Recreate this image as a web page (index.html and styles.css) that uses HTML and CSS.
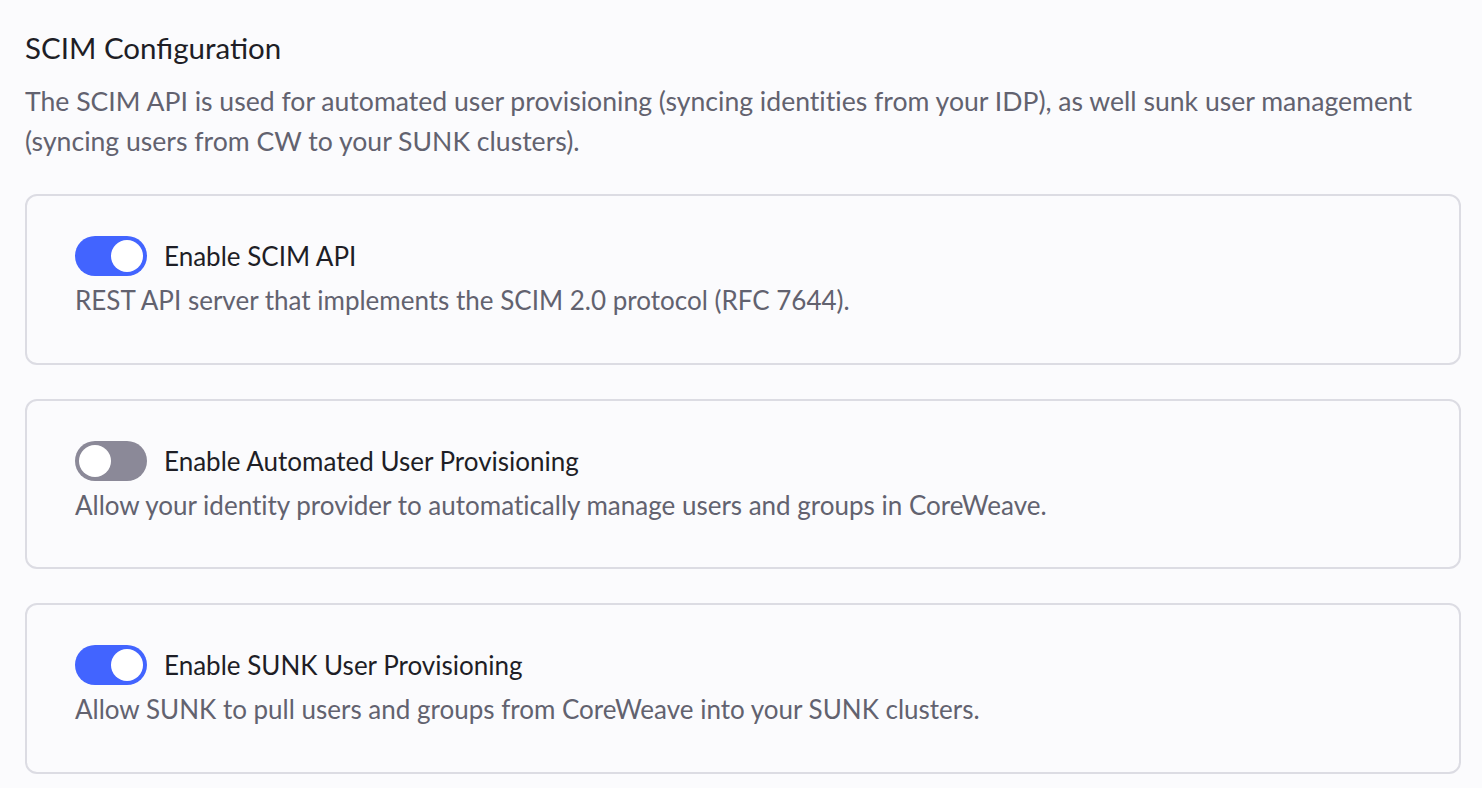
FILE: index.html
```html
<!DOCTYPE html>
<html lang="en">
<head>
<meta charset="utf-8">
<title>SCIM Configuration</title>
<link rel="stylesheet" href="styles.css">
</head>
<body>
<main class="page">
  <section class="intro">
    <h1 class="title">SCIM Configuration</h1>
    <p class="lead">The SCIM API is used for automated user provisioning (syncing identities from your IDP), as well sunk user management (syncing users from CW to your SUNK clusters).</p>
  </section>
  <div class="cards">
    <div class="card">
      <div class="row">
        <span class="switch on"><span class="knob"></span></span>
        <span class="label">Enable SCIM API</span>
      </div>
      <p class="desc">REST API server that implements the SCIM 2.0 protocol (RFC 7644).</p>
    </div>
    <div class="card">
      <div class="row">
        <span class="switch off"><span class="knob"></span></span>
        <span class="label">Enable Automated User Provisioning</span>
      </div>
      <p class="desc">Allow your identity provider to automatically manage users and groups in CoreWeave.</p>
    </div>
    <div class="card">
      <div class="row">
        <span class="switch on"><span class="knob"></span></span>
        <span class="label">Enable SUNK User Provisioning</span>
      </div>
      <p class="desc">Allow SUNK to pull users and groups from CoreWeave into your SUNK clusters.</p>
    </div>
  </div>
</main>
</body>
</html>
```

FILE: styles.css
```css
* { box-sizing: border-box; }
html, body {
  margin: 0;
  padding: 0;
  background: #fbfbfd;
}
body {
  font-family: "Lato", "Noto Sans", sans-serif;
  color: #1e1e26;
}
.page {
  padding: 26px 21px 0 25px;
}
.title {
  margin: 0;
  font-size: 29.5px;
  line-height: 44px;
  font-weight: 400;
  color: #1e1e26;
}
.lead {
  margin: 11px 0 0;
  font-size: 26.6px;
  line-height: 40px;
  color: #62626f;
  font-variant-ligatures: none;
}
.cards {
  margin-top: 33px;
  display: flex;
  flex-direction: column;
  gap: 34px;
}
.card {
  border: 2px solid #dcdce3;
  border-radius: 12px;
  background: #fbfbfd;
  padding: 40px 48px 0 48px;
  height: 170.5px;
}
.row {
  display: flex;
  align-items: center;
  gap: 17px;
  height: 40px;
}
.switch {
  width: 72px;
  height: 40px;
  border-radius: 20px;
  position: relative;
  flex: none;
}
.switch.on { background: #4264ff; }
.switch.off { background: #8b8998; }
.knob {
  position: absolute;
  top: 4px;
  width: 32px;
  height: 32px;
  border-radius: 50%;
  background: #ffffff;
}
.switch.on .knob { left: 36px; }
.switch.off .knob { left: 4px; }
.label {
  font-size: 26px;
  color: #1e1e26;
}
.desc {
  margin: 7px 0 0;
  font-size: 26px;
  line-height: 34px;
  color: #62626f;
  font-variant-ligatures: none;
}
```
